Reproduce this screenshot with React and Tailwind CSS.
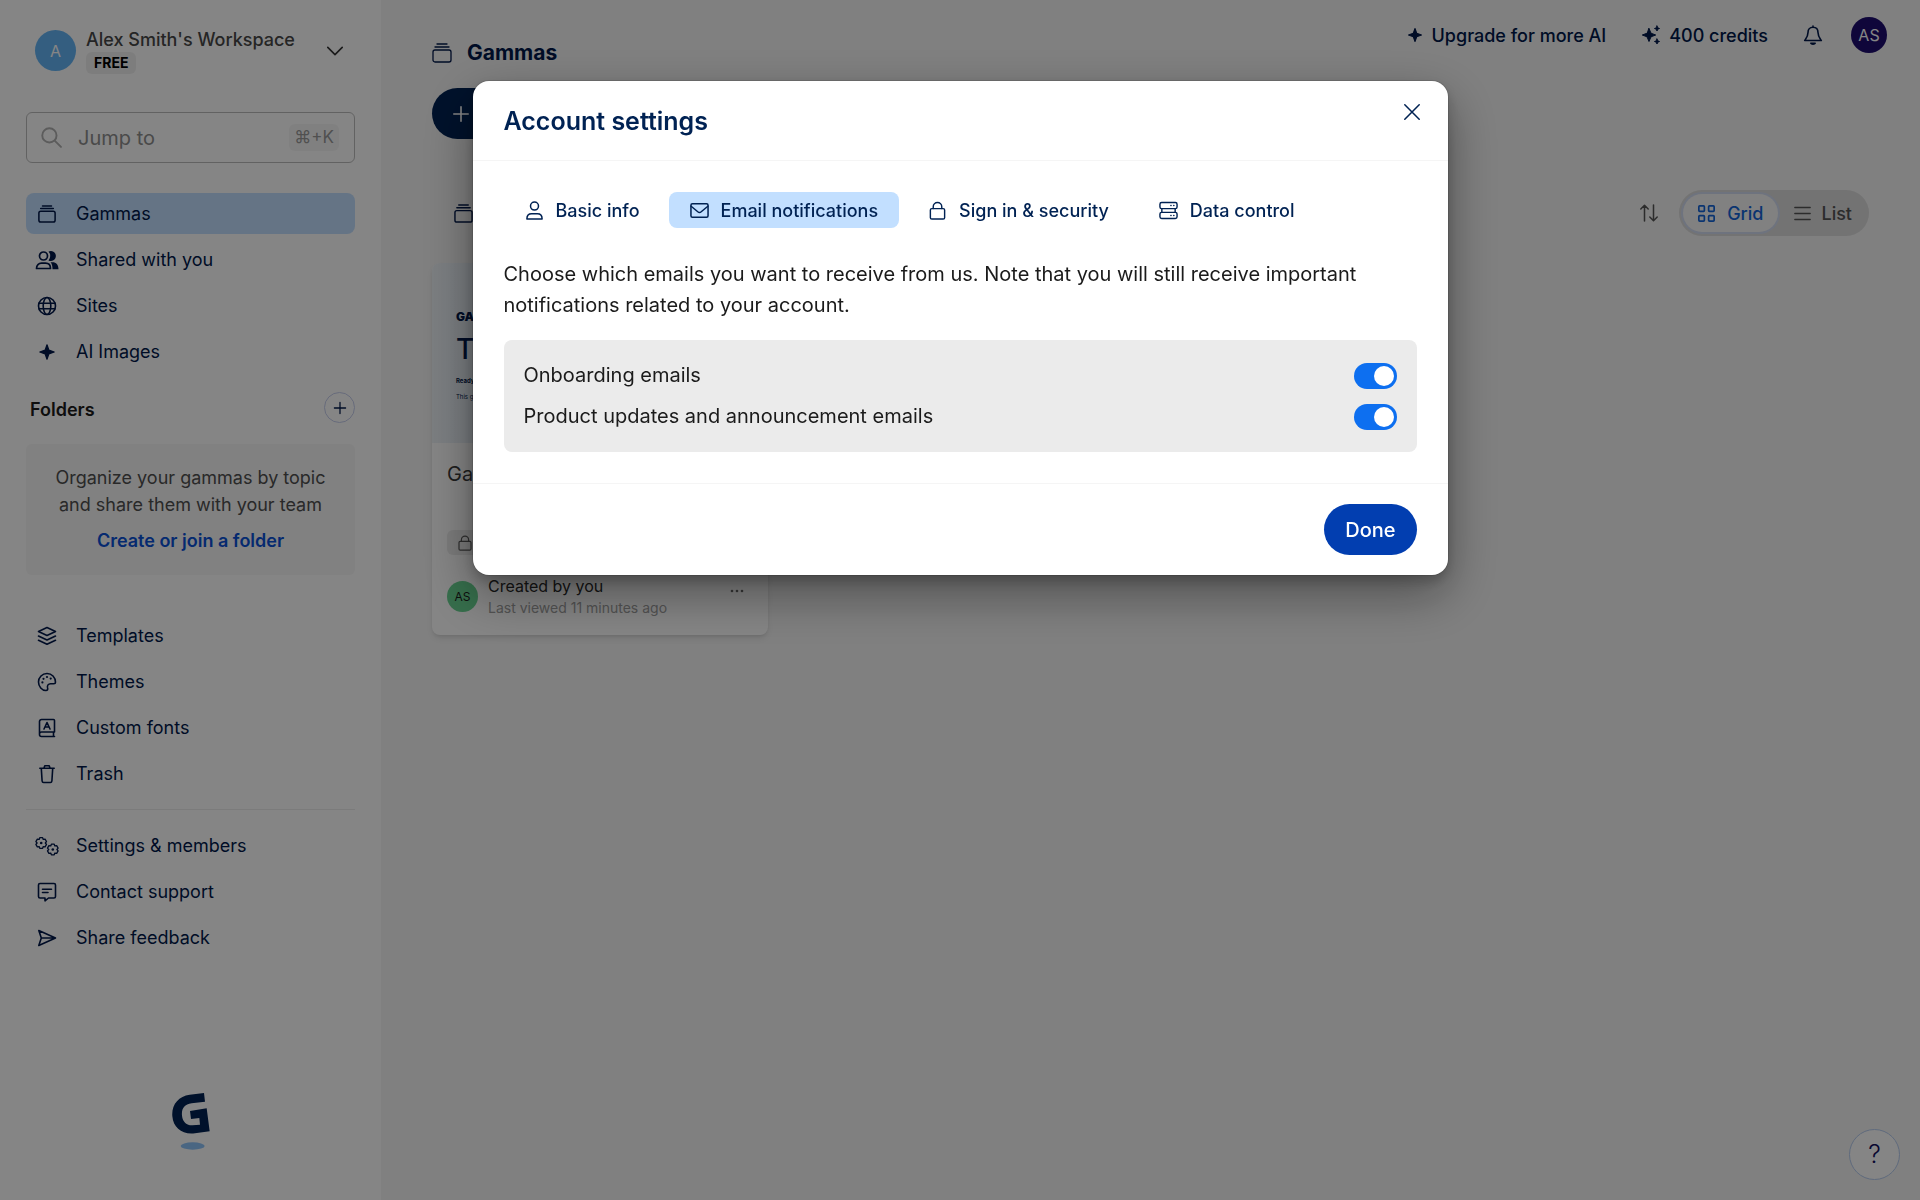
import { useState } from "react";

const Icon = ({ className = "size-5", box = "0 0 20 20", width = 1.4, children }) => (
  <svg
    className={`shrink-0 ${className}`}
    viewBox={box}
    fill="none"
    stroke="currentColor"
    strokeWidth={width}
    strokeLinecap="round"
    strokeLinejoin="round"
    aria-hidden="true"
  >
    {children}
  </svg>
);

const StackIcon = ({ className, width = 1.5 }) => (
  <Icon className={className} width={width}>
    <path d="M5 1h10M3 4h14" />
    <rect x="1" y="7" width="18" height="12" rx="2" />
  </Icon>
);

const UsersIcon = () => (
  <Icon className="h-5 w-6" box="0 0 24 20" width={1.7}>
    <circle cx="8.5" cy="6" r="4" />
    <path d="M1.5 18.5c0-3.5 2.2-5.3 5-5.3h4c2.8 0 5 1.8 5 5.3z" />
    <path fill="currentColor" stroke="none" d="M13.5 1.6a5 5 0 1 1 0 8.8 6.5 6.5 0 0 0 0-8.8zM15.5 12.3h2.2c3.3 0 5.8 2.5 5.8 7h-6c0-3-.5-5.4-2-7z" />
  </Icon>
);

const GlobeIcon = () => (
  <Icon width={1.6}>
    <circle cx="10" cy="10" r="8.5" />
    <ellipse cx="10" cy="10" rx="3.8" ry="8.5" />
    <path d="M2 7.2h16M2 12.8h16" />
  </Icon>
);

const SparkleIcon = ({ className = "size-5" }) => (
  <Icon className={className} width={1.2}>
    <path fill="currentColor" d="M10 2.8l1.9 5.3 5.3 1.9-5.3 1.9L10 17.2l-1.9-5.3L2.8 10l5.3-1.9z" />
  </Icon>
);

const SparklesIcon = () => (
  <Icon width={1}>
    <path fill="currentColor" d="M8 3.5l2 4.7 4.7 1.8-4.7 1.8-2 4.7-2-4.7L1.3 10 6 8.2z" />
    <path fill="currentColor" d="M16 1l.7 1.8 1.8.7-1.8.7L16 6l-.7-1.8-1.8-.7 1.8-.7zM16 14l.7 1.8 1.8.7-1.8.7L16 19l-.7-1.8-1.8-.7 1.8-.7z" />
  </Icon>
);

const LayersIcon = () => (
  <Icon width={1.6}>
    <path d="M10 1.5l8.5 4-8.5 4-8.5-4z" />
    <path d="M1.5 10l8.5 4 8.5-4M1.5 14.3l8.5 4 8.5-4" />
  </Icon>
);

const PaletteIcon = () => (
  <Icon width={1.6}>
    <path d="M18.5 10.3C18.5 5.3 14.7 1.5 10 1.5S1.5 5.3 1.5 10s3.5 8.3 7.3 8.5c1.8.1 2.2-1.2 1.8-2.5-.7-2.6.7-4.3 3-4.3h3.2c1 0 1.7-.5 1.7-1.4z" />
    <g fill="currentColor" stroke="none">
      <circle cx="5.4" cy="10.4" r="1.1" />
      <circle cx="6.5" cy="6.8" r="1.1" />
      <circle cx="10" cy="5" r="1.1" />
      <circle cx="13.7" cy="6.6" r="1.1" />
    </g>
  </Icon>
);

const FontBookIcon = () => (
  <Icon width={1.6}>
    <path d="M17.5 14V2.5c0-.6-.4-1-1-1H4.5a2 2 0 0 0-2 2v13a2 2 0 0 0 2 2h13M17.5 14h-13a2 2 0 0 0-2 2M16.5 14v4.5" />
    <path d="M7 11l3-6.5 3 6.5M8 9h4" />
  </Icon>
);

const TrashIcon = () => (
  <Icon width={1.6}>
    <path d="M2.8 4.2h14.4M7 4l.8-2.3h4.4L13 4M4.3 4.5l.8 12.5c.1.9.7 1.5 1.5 1.5h6.8c.8 0 1.4-.6 1.5-1.5l.8-12.5" />
  </Icon>
);

// six flat teeth around the given centre
const gearPoints = (cx, cy) =>
  [0, 60, 120, 180, 240, 300]
    .flatMap((a) => [[a - 15, 5.5], [a + 15, 5.5], [a + 30, 4.1]])
    .map(([deg, r]) => {
      const rad = (deg * Math.PI) / 180;
      return `${(cx + r * Math.sin(rad)).toFixed(2)},${(cy - r * Math.cos(rad)).toFixed(2)}`;
    })
    .join(" ");

const GearsIcon = () => (
  <Icon className="h-5 w-6" box="0 0 24 20" width={1.3}>
    <polygon points={gearPoints(6.2, 7)} />
    <polygon points={gearPoints(17.8, 13.5)} />
    <g fill="currentColor" stroke="none">
      <circle cx="6.2" cy="7" r="1.3" />
      <circle cx="17.8" cy="13.5" r="1.3" />
    </g>
  </Icon>
);

const ChatIcon = () => (
  <Icon width={1.6}>
    <path d="M3 1.5h14c.9 0 1.5.6 1.5 1.5v11.5c0 .9-.6 1.5-1.5 1.5h-5.5L8 18.8V16H3c-.9 0-1.5-.6-1.5-1.5V3c0-.9.6-1.5 1.5-1.5z" />
    <path d="M5.5 7.2h9M5.5 10.5H11" />
  </Icon>
);

const SendIcon = () => (
  <Icon width={1.6}>
    <path d="M1.8 2.5L18.5 10 1.8 17.5 4.3 10zM4.3 10h14" />
  </Icon>
);

const PlusIcon = ({ className }) => (
  <Icon className={className} width={1.8}>
    <path d="M10 2v16M2 10h16" />
  </Icon>
);

const LockIcon = ({ className }) => (
  <Icon className={className} width={1.5}>
    <rect x="2.5" y="8" width="15" height="11" rx="1.5" />
    <path d="M5.5 8V6a4.5 4.5 0 0 1 9 0v2" />
  </Icon>
);

const UserIcon = () => (
  <Icon className="size-[19px]" width={1.6}>
    <circle cx="10" cy="5.3" r="4.2" />
    <path d="M2 19c0-3.5 2.2-5.5 5-5.5h6c2.8 0 5 2 5 5.5z" />
  </Icon>
);

const MailIcon = () => (
  <Icon className="size-[19px]" width={1.6}>
    <rect x="1" y="3" width="18" height="14" rx="1.5" />
    <path d="M1.2 5.5l7 5.8c1.1.9 2.5.9 3.6 0l7-5.8" />
  </Icon>
);

const ServerIcon = () => (
  <Icon className="size-[19px]" width={1.5}>
    <rect x="1" y="1.5" width="18" height="6.5" rx="1.8" />
    <rect x="1" y="12" width="18" height="6.5" rx="1.8" />
    <path d="M3 8v4M17 8v4M12.5 4.8h.2M15.5 4.8h.2M12.5 15.2h.2M15.5 15.2h.2" />
  </Icon>
);

const mainLinks = [
  { label: "Gammas", icon: <StackIcon className="size-[18px]" width={1.7} />, active: true },
  { label: "Shared with you", icon: <UsersIcon /> },
  { label: "Sites", icon: <GlobeIcon /> },
  { label: "AI Images", icon: <SparkleIcon /> },
];

const toolLinks = [
  { label: "Templates", icon: <LayersIcon /> },
  { label: "Themes", icon: <PaletteIcon /> },
  { label: "Custom fonts", icon: <FontBookIcon /> },
  { label: "Trash", icon: <TrashIcon /> },
];

const supportLinks = [
  { label: "Settings & members", icon: <GearsIcon /> },
  { label: "Contact support", icon: <ChatIcon /> },
  { label: "Share feedback", icon: <SendIcon /> },
];

const tabs = [
  { id: "basic", label: "Basic info", icon: <UserIcon /> },
  { id: "email", label: "Email notifications", icon: <MailIcon /> },
  { id: "security", label: "Sign in & security", icon: <LockIcon className="size-[19px]" /> },
  { id: "data", label: "Data control", icon: <ServerIcon /> },
];

const NavList = ({ items }) => (
  <ul className="flex flex-col gap-[5px]">
    {items.map((item) => (
      <li key={item.label}>
        <a
          href="#"
          className={`flex items-center gap-4 h-[41px] pl-2 rounded-lg text-[18px] text-[#00184a] ${
            item.active ? "bg-[#c2dfff]" : ""
          }`}
        >
          <span className="flex w-[26px] justify-center">{item.icon}</span>
          {item.label}
        </a>
      </li>
    ))}
  </ul>
);

const Sidebar = () => (
  <aside className="flex flex-col w-[381px] shrink-0 bg-white px-[26px] pb-[50px]">
    <button className="flex items-center h-[101px] pl-[9px] pr-3 text-left">
      <span className="flex items-center justify-center size-[41px] rounded-full bg-[#64b5f6] text-[16px] text-white">A</span>
      <span className="flex flex-col items-start flex-1 pl-[10px]">
        <span className="text-[18px] leading-6 font-medium text-[#484848]">Alex Smith's Workspace</span>
        <span className="flex items-center h-[22px] px-2 rounded-md bg-[#f0f0f0] text-[14px] font-bold text-black">FREE</span>
      </span>
      <Icon className="size-4 text-[#333]" width={2}>
        <path d="M1 5.5l9 9 9-9" />
      </Icon>
    </button>

    <div className="flex items-center h-[51px] mt-[11px] pl-[14px] pr-[15px] rounded-md border border-[#bdbdbd]">
      <Icon className="size-[21px] text-[#b0b0b0]" width={1.8}>
        <circle cx="8" cy="8" r="6.8" />
        <path d="M13 13l6 6" />
      </Icon>
      <input
        aria-label="Jump to"
        placeholder="Jump to"
        className="flex-1 min-w-0 pl-4 bg-transparent text-[20px] outline-none placeholder:text-[#8e8e8e]"
      />
      <kbd className="flex items-center h-[27px] px-[5px] rounded-md bg-[#f6f6f6] font-['Inter',sans-serif] text-[17px] text-[#9a9a9a]">
        ⌘+K
      </kbd>
    </div>

    <nav className="mt-[30px]">
      <NavList items={mainLinks} />
    </nav>

    <div className="flex items-center justify-between mt-5 pl-1">
      <h2 className="mt-1 text-[18px] font-semibold text-[#1b1b1b]">Folders</h2>
      <button aria-label="Add folder" className="flex items-center justify-center size-[31px] rounded-full border border-[#c6cdec] text-[#00184a]">
        <PlusIcon className="size-[14px]" />
      </button>
    </div>
    <div className="mt-[21px] px-4 pt-5 pb-[21px] rounded-md bg-[#f7f7f7] text-center text-[18px] leading-[27px] text-[#4f4f4f]">
      <p>Organize your gammas by topic and share them with your team</p>
      <a href="#" className="inline-block mt-[9px] font-semibold text-[#0b51d6]">
        Create or join a folder
      </a>
    </div>

    <nav className="mt-10">
      <NavList items={toolLinks} />
      <hr className="my-[15px] border-[#ececec]" />
      <NavList items={supportLinks} />
    </nav>

    <svg className="mt-auto mx-auto w-[38px] h-[57px]" viewBox="-1 0 114 171" role="img" aria-label="Gamma">
      <path
        fill="#002253"
        d="M95 0l3 26-40 5C35 34 27 48 29 68c2 20 16 30 31 29l23-2-2-20-25 3-3-24 50-8 9 69-44 6C30 126 3 105 0 70-3 35 18 10 52 5z"
      />
      <ellipse cx="61" cy="159" rx="36" ry="11" fill="#8fc3fa" />
    </svg>
  </aside>
);

const Toolbar = () => (
  <header className="flex justify-between items-start">
    <h1 className="flex items-center gap-[15px] mt-[39px] text-[21px] leading-7 font-bold text-[#00184a]">
      <StackIcon className="size-5" width={1.3} />
      Gammas
    </h1>
    <div className="flex items-center mt-[17px] text-[18px] font-medium text-[#00184a]">
      <button className="flex items-center gap-2">
        <SparkleIcon className="size-[18px]" />
        Upgrade for more AI
      </button>
      <button className="flex items-center gap-2 ml-[35px]">
        <SparklesIcon />
        400 credits
      </button>
      <button aria-label="Notifications" className="ml-[35px]">
        <Icon width={1.6}>
          <path d="M10 2.3c3.3 0 5 2.4 5 5.2 0 4 1.5 5.6 3.3 8H1.7C3.5 13.1 5 11.5 5 7.5c0-2.8 1.7-5.2 5-5.2zM10 1v1" />
          <path d="M7.8 18.2h4.4c-.5 1.2-3.9 1.2-4.4 0z" />
        </Icon>
      </button>
      <button className="flex items-center justify-center size-9 ml-7 rounded-full bg-[#1d0c70] text-[16px] font-normal text-white">
        AS
      </button>
    </div>
  </header>
);

const GammaCard = () => (
  <article className="w-[336px] mt-[27px] rounded-lg bg-white shadow-md">
    <div className="flex flex-col h-[180px] pt-12 pl-6 rounded-t-lg bg-gradient-to-r from-[#eef3f8] to-[#c9e0f5] text-[#00184a]">
      <span className="text-[12px] leading-3 font-black">GA</span>
      <span className="mt-[10px] text-[28px] leading-8 font-medium">T</span>
      <span className="mt-3 text-[6px] leading-2 font-bold">Ready</span>
      <span className="mt-2 text-[6px] leading-2">This ga</span>
    </div>
    <div className="px-[15px] pt-4 pb-4">
      <h3 className="text-[20px] leading-[30px] text-[#3a3a3a]">Ga</h3>
      <span className="inline-flex items-center h-[25px] mt-[41px] px-[10px] rounded-md bg-[#ececec] text-[#5a5a5a]">
        <LockIcon className="size-4" />
      </span>
      <div className="flex items-center mt-[18px]">
        <span className="flex items-center justify-center size-[31px] rounded-full bg-[#68d391] text-[12px] text-[#1b1b1b]">AS</span>
        <div className="flex-1 pl-[10px]">
          <p className="text-[16px] leading-[22px] text-[#2a2a2a]">Created by you</p>
          <p className="text-[14px] leading-[22px] text-[#a0a0a0]">Last viewed 11 minutes ago</p>
        </div>
        <button aria-label="More options" className="mr-2 mb-3 text-[#6a6a6a]">
          <Icon className="w-4 h-1" box="0 0 16 4" width={0}>
            <g fill="currentColor">
              <circle cx="3" cy="2" r="1.3" />
              <circle cx="8" cy="2" r="1.3" />
              <circle cx="13" cy="2" r="1.3" />
            </g>
          </Icon>
        </button>
      </div>
    </div>
  </article>
);

const Dashboard = () => (
  <main className="flex-1 min-w-0 pl-[51px] pr-[33px]">
    <Toolbar />
    <button aria-label="Create new" className="flex items-center h-[51px] w-[180px] mt-[21px] px-5 rounded-full bg-[#002253] text-white">
      <PlusIcon className="size-[18px]" />
    </button>
    <div className="flex items-center justify-between mt-[51px] pl-[22px] pr-[18px]">
      <StackIcon className="size-[19px] text-[#00184a]" />
      <div className="flex items-center gap-5">
        <button aria-label="Sort" className="text-[#555]">
          <Icon width={1.5}>
            <path d="M5.5 18V2.5M1.8 6l3.7-3.7L9.2 6M14.5 2v15.5M10.8 14l3.7 3.7 3.7-3.7" />
          </Icon>
        </button>
        <div className="flex items-center h-[46px] p-1 rounded-full bg-[#dcdcdc] text-[18px] font-medium">
          <button className="flex items-center gap-3 h-full px-[15px] rounded-full bg-[#f7f7f7] ring-2 ring-[#d3dcf2] text-[#1565d8]">
            <Icon className="size-[17px]" width={2}>
              <rect x="1" y="1" width="6.5" height="6.5" rx="1" />
              <rect x="12.5" y="1" width="6.5" height="6.5" rx="1" />
              <rect x="1" y="12.5" width="6.5" height="6.5" rx="1" />
              <rect x="12.5" y="12.5" width="6.5" height="6.5" rx="1" />
            </Icon>
            Grid
          </button>
          <button className="flex items-center gap-[10px] h-full pl-4 pr-[13px] text-[#555]">
            <Icon className="size-[17px]" width={1.7}>
              <path d="M1 3h18M1 10h18M1 17h18" />
            </Icon>
            List
          </button>
        </div>
      </div>
    </div>
    <GammaCard />
  </main>
);

const Toggle = ({ label, checked, onChange }) => (
  <label className="flex items-center justify-between">
    {label}
    <input
      type="checkbox"
      role="switch"
      checked={checked}
      onChange={onChange}
      className="appearance-none flex items-center w-[43px] h-[26px] p-[3px] rounded-full bg-[#b5b5b5] checked:bg-[#0d6ff0] checked:justify-end before:size-5 before:rounded-full before:bg-white"
    />
  </label>
);

const AccountSettings = () => {
  const [tab, setTab] = useState("email");
  const [onboarding, setOnboarding] = useState(true);
  const [updates, setUpdates] = useState(true);

  return (
    <section
      role="dialog"
      aria-label="Account settings"
      className="w-full max-w-[975px] rounded-2xl bg-white shadow-[0_0_0_1px_rgba(0,0,0,0.1),0_6px_13px_rgba(0,0,0,0.2),0_19px_51px_rgba(0,0,0,0.4)]"
    >
      <header className="flex items-start justify-between h-20 pl-[31px] pr-[27px] border-b border-[#f5f5f5] text-[#002253]">
        <h2 className="pt-[22px] text-[25px] leading-9 font-semibold">Account settings</h2>
        <button aria-label="Close" className="mt-[22px]">
          <Icon className="size-[18px]" width={1.7}>
            <path d="M2 2l16 16M18 2L2 18" />
          </Icon>
        </button>
      </header>

      <div className="px-[31px] pt-[31px] pb-[30px] text-[20px] text-[#1b1b1b]">
        <div role="tablist" className="flex gap-2">
          {tabs.map(({ id, label, icon }) => (
            <button
              key={id}
              role="tab"
              aria-selected={tab === id}
              onClick={() => setTab(id)}
              className={`flex items-center gap-3 h-9 px-[21px] rounded-lg text-[18px] font-medium text-[#002253] ${
                tab === id ? "bg-[#c2dfff]" : ""
              }`}
            >
              {icon}
              {label}
            </button>
          ))}
        </div>
        <p className="mt-[31px] leading-[31px]">
          Choose which emails you want to receive from us. Note that you will still receive important notifications
          related to your account.
        </p>
        <div className="flex flex-col gap-[10px] mt-[19px] mb-px p-5 rounded-lg bg-[#ebebeb] leading-[31px]">
          <Toggle label="Onboarding emails" checked={onboarding} onChange={() => setOnboarding(!onboarding)} />
          <Toggle label="Product updates and announcement emails" checked={updates} onChange={() => setUpdates(!updates)} />
        </div>
      </div>

      <footer className="flex justify-end px-[31px] py-5 border-t border-[#f5f5f5]">
        <button className="h-[51px] px-[21px] rounded-full bg-[#023eb0] text-[20px] font-medium text-white">Done</button>
      </footer>
    </section>
  );
};

export default function App() {
  return (
    <div className="min-h-screen flex bg-[#f5f5f5] font-['Inter',sans-serif]">
      <Sidebar />
      <Dashboard />
      <button
        aria-label="Help"
        className="fixed right-5 bottom-5 flex items-center justify-center size-[51px] rounded-full border border-[#b5cbee] bg-white text-[25px] font-light text-[#12105e]"
      >
        ?
      </button>
      <div className="fixed inset-0 flex items-start justify-center pt-[81px] bg-black/48">
        <AccountSettings />
      </div>
    </div>
  );
}
